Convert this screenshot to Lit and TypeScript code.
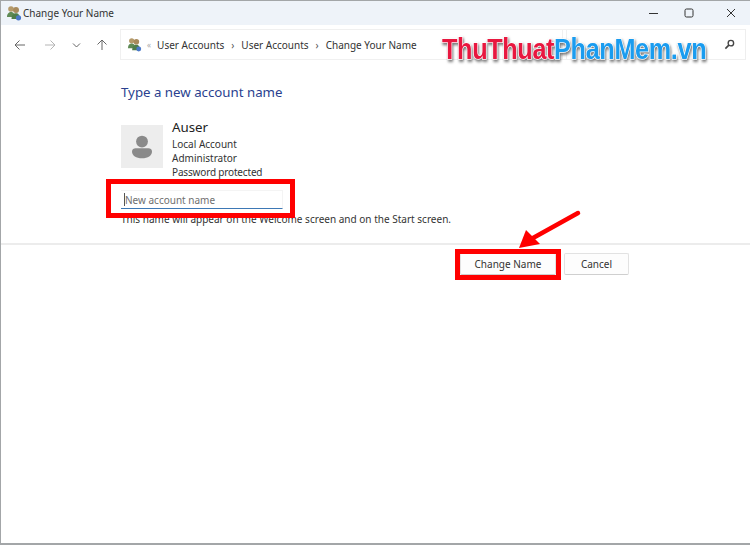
import { LitElement, html, css } from "lit";
import { customElement } from "lit/decorators.js";

const usersIcon = (cls: string) => html`<svg class=${cls} viewBox="0 0 16 16">
  <circle cx="5" cy="4" r="2.800" fill="#b59a6a"/>
  <path d="M1 12c0-3.500 2-5 4-5s4 1.500 4 5z" fill="#5f8a55"/>
  <circle cx="10" cy="5" r="3" fill="#a88a5c"/>
  <path d="M5.500 14c0-4 2.200-5.800 4.500-5.800S14 10 14 14z" fill="#4f7d4a"/>
  <circle cx="12.500" cy="12.800" r="2.600" fill="#4a78c8"/>
</svg>`;

@customElement("app-root")
export class AppRoot extends LitElement {
  static styles = css`
    :host { display: block; width: 750px; height: 545px; font-family: "Noto Sans", "Open Sans", sans-serif; color: #222; }
    * { box-sizing: border-box; }
    .win { position: relative; width: 750px; height: 545px; background: #fff; border: 1px solid #a3a6a8; border-width: 1px 0 2px 1px; display: flex; flex-direction: column; overflow: hidden; }
    .title { height: 24px; background: #eef3f9; display: flex; align-items: center; padding-left: 5px; gap: 1px; font-size: 10px; color: #333; flex: none; }
    .ticon { width: 16px; height: 16px; }
    .ctrls { margin-left: auto; display: flex; align-items: center; padding-right: 14px; }
    .ctrls svg { width: 10px; height: 10px; display: block; }
    .ctrls .mx { margin: 0 32px 0 25px; }
    .nav { height: 37px; flex: none; display: flex; align-items: center; padding: 4px 4px 2px 0; }
    .arrows { width: 119px; display: flex; align-items: center; flex: none; padding-left: 13px; }
    .arrows svg { width: 12px; height: 12px; display: block; }
    .arrows .fw { margin-left: 18px; }
    .arrows .dn { width: 9px; margin-left: 16px; }
    .arrows .up { margin-left: 15px; }
    .addr { flex: 1; height: 31px; display: flex; align-items: center; border: 1px solid #f0f0f0; border-right: 1px solid #eee; padding: 0 10px 0 6px; font-size: 10px; color: #333; }
    .aicon { width: 15px; height: 15px; margin-right: 5px; }
    .dbl { font-size: 8px; color: #aaa; margin-right: 6px; line-height: 1; }
    .sep { width: 17px; text-align: center; font-size: 10px; color: #555; }
    .split { margin-left: auto; width: 5px; height: 29px; border-left: 1px solid #f0f0f0; border-right: 1px solid #f0f0f0; margin-right: 157px; }
    .search { width: 11px; height: 11px; }
    .content { padding: 21px 0 0 120px; flex: none; }
    h1 { margin: 0; font-size: 13.270px; font-weight: 400; line-height: 19px; color: #2a3f8f; }
    .user { display: flex; gap: 9px; margin-top: 16px; }
    .avatar { width: 42px; height: 43px; background: #ededed; display: flex; align-items: center; justify-content: center; margin-top: 7px; }
    .avatar svg { width: 20px; height: 24px; }
    .info { font-size: 10px; line-height: 14px; color: #333; }
    .name { font-size: 13.300px; line-height: 18px; color: #222; margin-bottom: 1px; }
    .pw { letter-spacing: -0.170px; }
    .field { margin-top: 11px; width: 162px; height: 19px; border-bottom: 1.500px solid #3d78b5; border-top: 1px solid #f4f4f4; border-right: 1px solid #f4f4f4; display: flex; align-items: center; padding-left: 3px; font-size: 10px; color: #6f6f6f; }
    .caret { width: 1px; height: 13px; background: #555; }
    .hint { font-size: 10.020px; line-height: 14px; margin-top: 3px; color: #333; }
    .rule { height: 2px; background: #ececec; margin-top: 17px; flex: none; }
    .actions { display: flex; gap: 8px; padding: 8px 0 0 459px; }
    .btn { height: 22px; font-size: 10px; color: #333; background: #fdfdfd; border: 1px solid #e2e2e2; border-bottom-color: #cfcfcf; border-radius: 2px; display: flex; align-items: center; justify-content: center; }
    .change { width: 96px; }
    .cancel { width: 65px; }
    .red { position: absolute; border: 5px solid #f00; }
    .r1 { left: 105px; top: 178px; width: 189px; height: 39px; }
    .r2 { left: 454px; top: 248px; width: 106px; height: 31px; }
    .arrow { position: absolute; left: 515px; top: 207px; width: 70px; height: 42px; }
    .mark { position: absolute; left: 441px; top: 31px; font-family: "Liberation Sans", sans-serif; font-weight: 700; font-size: 29px; line-height: 34px; letter-spacing: -0.400px; white-space: nowrap; transform: scaleX(0.87); transform-origin: left; filter: drop-shadow(1.500px 2px 1.500px rgba(0,0,0,.55)); -webkit-text-stroke: 1.500px #fff; paint-order: stroke fill; }
    .mark .a { color: #e8173f; }
    .mark .b { color: #1a9cef; }
  `;

  render() {
    return html`<div class="win">
      <div class="title">
        ${usersIcon("ticon")}<span>Change Your Name</span>
        <div class="ctrls">
          <svg viewBox="0 0 10 10"><path d="M0 5.500h9" stroke="#333" stroke-width="1" fill="none"/></svg>
          <svg class="mx" viewBox="0 0 10 10"><rect x="1" y="1" width="8" height="8" rx="1.500" stroke="#333" stroke-width="1" fill="none"/></svg>
          <svg viewBox="0 0 10 10"><path d="M1 1l8 8M9 1l-8 8" stroke="#333" stroke-width="1" fill="none"/></svg>
        </div>
      </div>
      <div class="nav">
        <div class="arrows">
          <svg viewBox="0 0 12 12"><path d="M11 6H1M5.500 1.500L1 6l4.500 4.500" stroke="#666" fill="none"/></svg>
          <svg class="fw" viewBox="0 0 12 12"><path d="M1 6h10M6.500 1.500L11 6l-4.500 4.500" stroke="#b5b5b5" fill="none"/></svg>
          <svg class="dn" viewBox="0 0 9 12"><path d="M1 4.500L4.500 8 8 4.500" stroke="#666" fill="none"/></svg>
          <svg class="up" viewBox="0 0 12 12"><path d="M6 11V1M1.500 5.500L6 1l4.500 4.500" stroke="#666" fill="none"/></svg>
        </div>
        <div class="addr">
          ${usersIcon("aicon")}<span class="dbl">«</span>
          <span>User Accounts</span><span class="sep">›</span>
          <span>User Accounts</span><span class="sep">›</span>
          <span>Change Your Name</span>
          <span class="split"></span>
          <svg class="search" viewBox="0 0 12 12"><circle cx="7.500" cy="4.500" r="3" stroke="#444" stroke-width="1.500" fill="none"/><path d="M5.300 6.700L1.500 10.500" stroke="#444" stroke-width="1.800"/></svg>
        </div>
      </div>
      <div class="content">
        <h1>Type a new account name</h1>
        <div class="user">
          <div class="avatar"><svg viewBox="0 0 22 26">
            <circle cx="11" cy="7" r="6.500" fill="#8a8a8a"/>
            <path d="M0 18c0-2.500 2-3.500 4-3.500h14c2 0 4 1 4 3.500 0 4.500-4.500 7.500-11 7.500S0 22.500 0 18z" fill="#8a8a8a"/>
          </svg></div>
          <div class="info">
            <div class="name">Auser</div>
            <div>Local Account</div>
            <div>Administrator</div>
            <div class="pw">Password protected</div>
          </div>
        </div>
        <div class="field"><span class="caret"></span><span>New account name</span></div>
        <div class="hint">This name will appear on the Welcome screen and on the Start screen.</div>
      </div>
      <div class="rule"></div>
      <div class="actions">
        <div class="btn change">Change Name</div>
        <div class="btn cancel">Cancel</div>
      </div>
      <div class="red r1"></div>
      <div class="red r2"></div>
      <svg class="arrow" viewBox="0 0 70 42">
        <path d="M62 5L17 30" stroke="#f00" stroke-width="4.500" stroke-linecap="round"/>
        <path d="M3 40L10 22L24 36z" fill="#f00"/>
      </svg>
      <div class="mark"><span class="a">ThuThuat</span><span class="b">PhanMem.vn</span></div>
    </div>`;
  }
}
